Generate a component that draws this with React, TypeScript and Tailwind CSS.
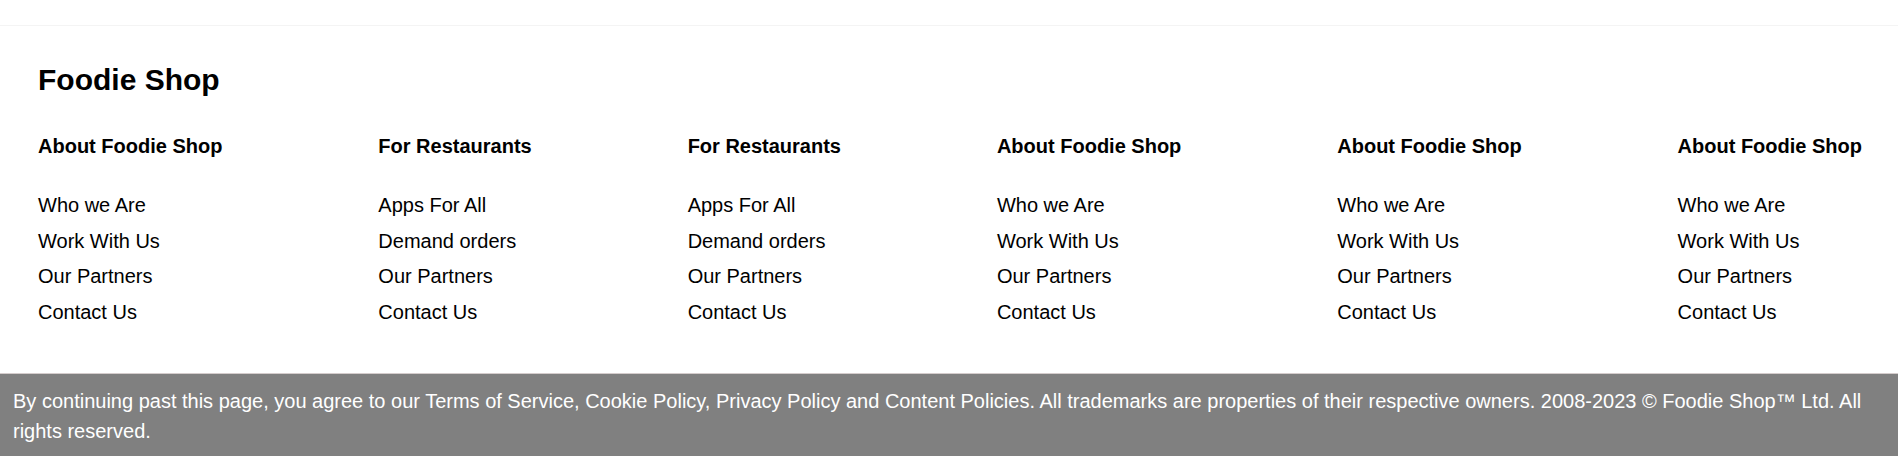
import React from 'react';

interface FooterColumn {
  title: string;
  links: string[];
}

const aboutLinks = ['Who we Are', 'Work With Us', 'Our Partners', 'Contact Us'];
const restaurantLinks = ['Apps For All', 'Demand orders', 'Our Partners', 'Contact Us'];

const columns: FooterColumn[] = [
  { title: 'About Foodie Shop', links: aboutLinks },
  { title: 'For Restaurants', links: restaurantLinks },
  { title: 'For Restaurants', links: restaurantLinks },
  { title: 'About Foodie Shop', links: aboutLinks },
  { title: 'About Foodie Shop', links: aboutLinks },
  { title: 'About Foodie Shop', links: aboutLinks },
];

export default function App() {
  return (
    <div className="min-h-screen bg-white text-black font-['Liberation_Sans',Arial,sans-serif]">
      <div className="h-[26px] border-b border-[#f4f4f4]" />

      <footer>
        <div className="pl-[38px] pr-[36px] pt-[35.6px] pb-[42.7px]">
          <h1 className="text-[30px] leading-[36px] font-bold">Foodie Shop</h1>

          <div className="mt-[34px] flex justify-between">
            {columns.map((col, i) => (
              <div key={i} className="flex flex-col">
                <h3 className="text-[20px] leading-[28px] font-bold whitespace-nowrap">{col.title}</h3>
                <ul className="mt-[28.5px]">
                  {col.links.map((link) => (
                    <li key={link} className="text-[20px] leading-[35.5px] whitespace-nowrap">
                      <a href="#" className="text-black">
                        {link}
                      </a>
                    </li>
                  ))}
                </ul>
              </div>
            ))}
          </div>
        </div>

        <div className="bg-[#808080] border-t border-[#d4cccc] px-[13px] pt-[12px] pb-[13px] text-white text-[20px] leading-[30px]">
          By continuing past this page, you agree to our Terms of Service, Cookie Policy, Privacy Policy and Content
          Policies. All trademarks are properties of their respective owners. 2008-2023 © Foodie Shop™ Ltd. All rights
          reserved.
        </div>
      </footer>
    </div>
  );
}
